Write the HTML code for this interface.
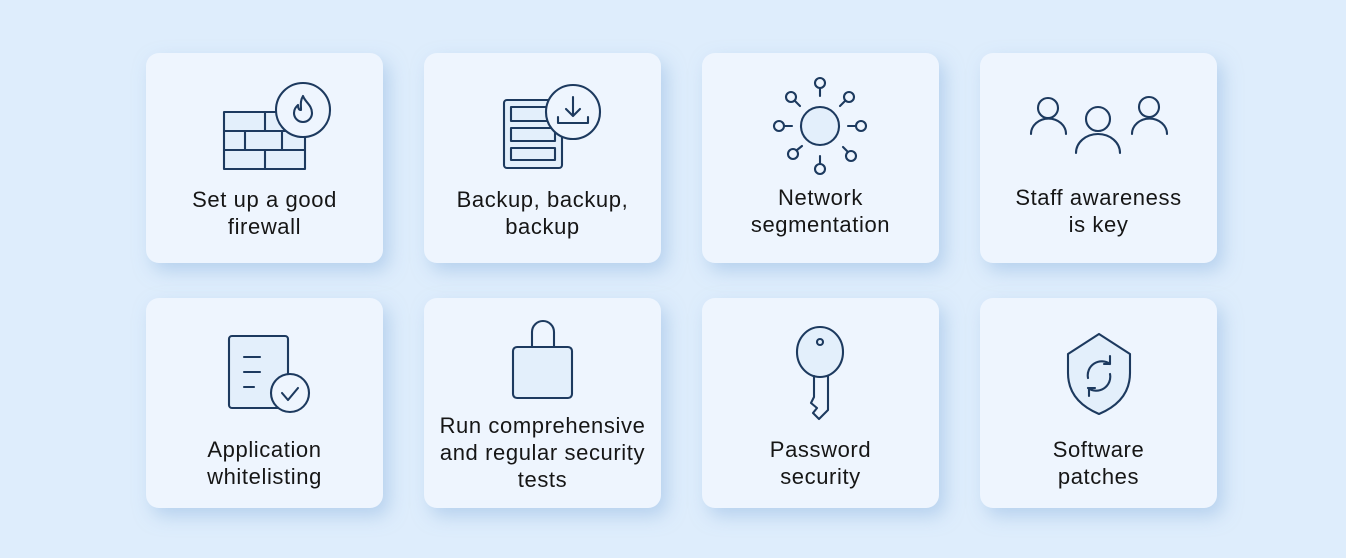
<!DOCTYPE html>
<html><head><meta charset="utf-8"><style>
html,body{margin:0;padding:0}
body{width:1346px;height:558px;background:#deedfc;position:relative;overflow:hidden;font-family:"Liberation Sans",sans-serif}
.c{position:absolute;width:237px;height:210px;background:#eef5fe;border-radius:13px;box-shadow:6px 8px 18px rgba(150,185,225,.55)}
.t{position:absolute;left:-10px;width:257px;text-align:center;font-size:22px;letter-spacing:0.6px;line-height:27px;color:#161616}
svg{position:absolute;left:0;top:0}
</style></head><body>
<div class="c" style="left:146px;top:53px"><div class="t" style="top:133px">Set up a good<br>firewall</div></div>
<div class="c" style="left:424px;top:53px"><div class="t" style="top:133px">Backup, backup,<br>backup</div></div>
<div class="c" style="left:702px;top:53px"><div class="t" style="top:131px">Network<br>segmentation</div></div>
<div class="c" style="left:980px;top:53px"><div class="t" style="top:131px">Staff awareness<br>is key</div></div>
<div class="c" style="left:146px;top:298px"><div class="t" style="top:138px">Application<br>whitelisting</div></div>
<div class="c" style="left:424px;top:298px"><div class="t" style="top:114px">Run comprehensive<br>and regular security<br>tests</div></div>
<div class="c" style="left:702px;top:298px"><div class="t" style="top:138px">Password<br>security</div></div>
<div class="c" style="left:980px;top:298px"><div class="t" style="top:138px">Software<br>patches</div></div>
<svg width="1346" height="558" fill="none" stroke="#1d3a5f" stroke-width="2.1" stroke-linecap="round" stroke-linejoin="round">
<rect x="224" y="112" width="81" height="57" fill="#e3effb"/>
<path d="M224 131H305M224 150H305M265 112V131M245 131V150M282 131V150M265 150V169"/>
<circle cx="303" cy="110" r="27" fill="#eef5fe"/>
<path d="M303 96c2 6 9 9 9 17a9 9 0 0 1-18 0c0-4 2-6 4-8 0 3 1 5 3 5 0-5-1-9 2-14z"/>
<rect x="504" y="100" width="58" height="68" rx="3" fill="#e3effb"/>
<rect x="511" y="107" width="44" height="14"/><rect x="511" y="128" width="44" height="13"/><rect x="511" y="148" width="44" height="12"/>
<circle cx="573" cy="112" r="27" fill="#eef5fe"/>
<path d="M573 97V116M566 109l7 7 7-7M558 117v6h30v-6"/>
<circle cx="820" cy="126" r="19" fill="#e3effb"/>
<circle cx="820" cy="83" r="5"/><path d="M820 88V96"/>
<circle cx="820" cy="169" r="5"/><path d="M820 164V156"/>
<circle cx="779" cy="126" r="5"/><path d="M784 126H792"/>
<circle cx="861" cy="126" r="5"/><path d="M856 126H848"/>
<circle cx="791" cy="97" r="5"/><path d="M795 101L800 106"/>
<circle cx="849" cy="97" r="5"/><path d="M845 101L840 106"/>
<circle cx="793" cy="154" r="5"/><path d="M797 150L802 146"/>
<circle cx="851" cy="156" r="5"/><path d="M847 151L843 147"/>
<circle cx="1048" cy="108" r="10"/><path d="M1031 134a17 15 0 0 1 35 0"/>
<circle cx="1098" cy="119" r="12"/><path d="M1076 153a22 19 0 0 1 44 0"/>
<circle cx="1149" cy="107" r="10"/><path d="M1132 134a17 15 0 0 1 35 0"/>
<rect x="229" y="336" width="59" height="72" rx="3" fill="#e3effb"/>
<path d="M244 357H260M244 372H260M244 387H254"/>
<circle cx="290" cy="393" r="19" fill="#eef5fe"/>
<path d="M282 393l6 7 10-12"/>
<path d="M532 347V332a11 11 0 0 1 22 0V347"/>
<rect x="513" y="347" width="59" height="51" rx="4" fill="#e3effb"/>
<ellipse cx="820" cy="352" rx="23" ry="25" fill="#e3effb"/>
<circle cx="820" cy="342" r="3"/>
<path d="M814 376V397l-3 6 6 5-4 5 6 6 9-9V376"/>
<path d="M1099 334l31 20v19c0 20-12 33-31 41-19-8-31-21-31-41v-19z" fill="#e3effb"/>
<path d="M1110 364a14 14 0 0 0-22 14M1088 388a14 14 0 0 0 22-14M1110 356v8h-6M1089 396v-8h6"/>
</svg>
</body></html>
